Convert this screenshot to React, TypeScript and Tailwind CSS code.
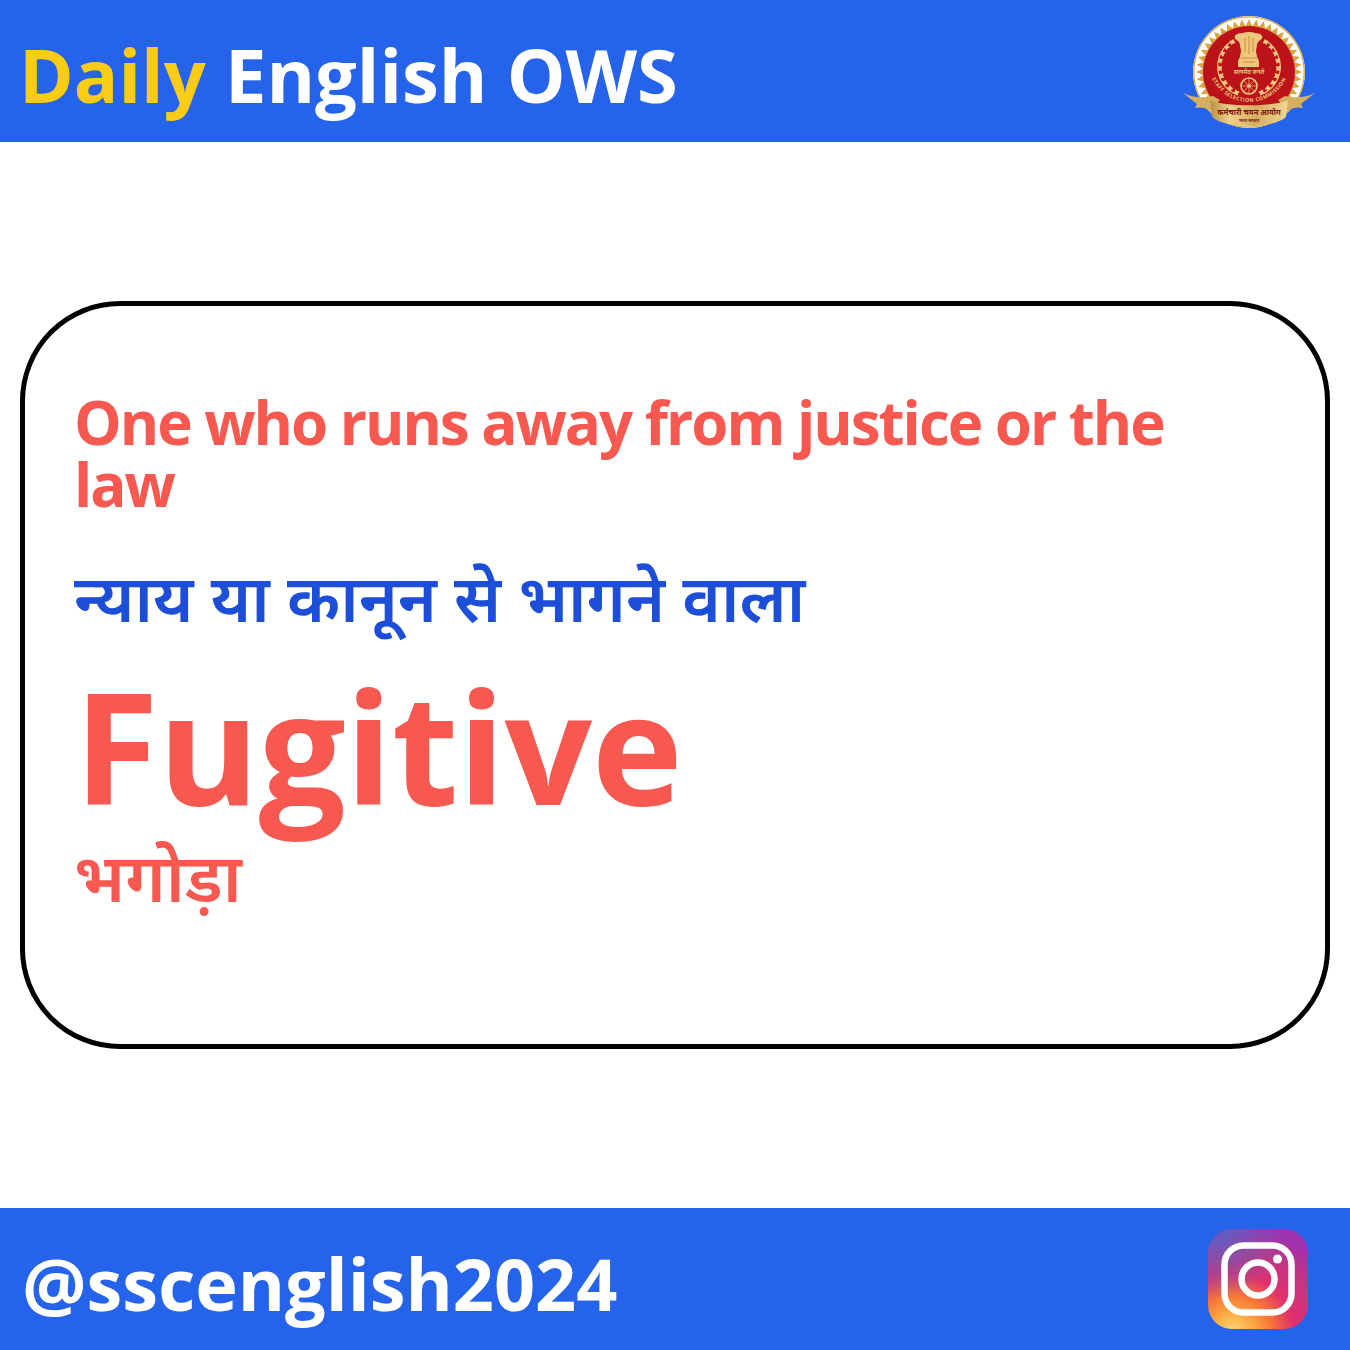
import React from 'react';

const GOLD = '#eec77c';

const ringAngles = Array.from({ length: 44 }, (_, i) => (i * 360) / 44);
// laurel leaves, degrees round the wreath centre
const leafAngles = [118, 133, 148, 163, 178, 193, 208, 223, 238];

const Leaves = ({ flip }: { flip?: boolean }) => (
  <g transform={flip ? 'translate(132 0) scale(-1 1)' : undefined}>
    <path d="M49 27A30 30 0 0 0 55 81" fill="none" stroke={GOLD} strokeWidth="1.2" />
    {leafAngles.map((a) => {
      const rad = (a * Math.PI) / 180;
      const x = 66 + 29 * Math.cos(rad);
      const y = 52 - 29 * Math.sin(rad);
      return (
        <g key={a} transform={`translate(${x} ${y}) rotate(${-a})`}>
          <ellipse cx="2.6" cy="-2.2" rx="3" ry="1.2" fill={GOLD} transform="rotate(-50 0 0)" />
          <ellipse cx="-2.6" cy="-2.2" rx="3" ry="1.2" fill={GOLD} transform="rotate(50 0 0)" />
        </g>
      );
    })}
  </g>
);

const SscLogo = () => (
  <svg width="132" height="114" viewBox="0 0 132 114" className="shrink-0">
    <defs>
      <linearGradient id="gold" x1="0" y1="0" x2="1" y2="0">
        <stop offset="0" stopColor="#b98f42" />
        <stop offset="0.25" stopColor="#eed08a" />
        <stop offset="0.6" stopColor="#d6ae5f" />
        <stop offset="1" stopColor="#f1d793" />
      </linearGradient>
      <path id="arc" d="M 25 47 A 41 41 0 0 0 107 47" fill="none" />
    </defs>
    <circle cx="66" cy="58" r="56" fill="#fff" />
    <circle cx="66" cy="58" r="55.2" fill="none" stroke="#d9a441" strokeWidth="1.2" />
    {ringAngles.map((a) => (
      <path key={a} d="M62.4 12.5 L69.6 12.5 L66 5z" fill="#d9a441" transform={`rotate(${a} 66 58)`} />
    ))}
    <circle cx="66" cy="58" r="46" fill="#bb1319" />
    {/* lion capital */}
    <path
      d="M60 19c2-1 4-1 6-1s4 0 6 1c3 0 6 1 7 3s-1 4-3 5c-1 1-2 2-2 4s-1 4-1 6 1 4 1 6c1 2 2 3 2 5v5H55v-5c0-2 1-3 2-5 0-2 1-4 1-6s-1-4-1-6-1-3-2-4c-2-1-4-3-3-5s4-3 8-3z"
      fill={GOLD}
    />
    <path d="M62 24v14M70 24v14M66 22v18M58 44h16M60 48h12" stroke="#c98f3c" strokeWidth="1" fill="none" />
    <Leaves />
    <Leaves flip />
    <text x="66" y="60" textAnchor="middle" fontSize="6" fontWeight="600" fill={GOLD} fontFamily="'Noto Sans', sans-serif">सत्यमेव जयते</text>
    {/* ashoka chakra */}
    <circle cx="66" cy="72" r="8" fill="none" stroke={GOLD} strokeWidth="1.6" />
    <circle cx="66" cy="72" r="1.8" fill={GOLD} />
    <path d="M66 64v16M58 72h16M60.3 66.3l11.4 11.4M71.7 66.3L60.3 77.7" stroke={GOLD} strokeWidth="0.7" />
    <text fontSize="5.2" fontWeight="700" fill={GOLD} letterSpacing="0.45" fontFamily="'Open Sans', sans-serif">
      <textPath href="#arc" startOffset="50%" textAnchor="middle">STAFF SELECTION COMMISSION</textPath>
    </text>
    {/* ribbon tails */}
    <path d="M0 79C10 84 20 84 30 82L37 86 27 97C22 93 16 93 12 94L14 90z" fill="#d6ae5f" />
    <path d="M132 79C122 84 112 84 102 82L95 86 105 97C110 93 116 93 120 94L118 90z" fill="#d6ae5f" />
    {/* ribbon band */}
    <path d="M27 86C40 93 92 93 105 86L103 103C90 115 42 115 29 103z" fill="url(#gold)" />
    <text x="66" y="101" textAnchor="middle" fontSize="7.6" fontWeight="700" fill="#7d1a10" fontFamily="'Noto Sans', sans-serif">कर्मचारी चयन आयोग</text>
    <text x="66" y="108" textAnchor="middle" fontSize="4" fontWeight="700" fill="#7d1a10" fontFamily="'Noto Sans', sans-serif">भारत सरकार</text>
  </svg>
);

const InstagramIcon = () => (
  <svg width="100" height="100" viewBox="0 0 100 100" className="shrink-0">
    <defs>
      <radialGradient id="ig1" cx="0.25" cy="1.05" r="1.1">
        <stop offset="0" stopColor="#ffdc80" />
        <stop offset="0.18" stopColor="#fcaf45" />
        <stop offset="0.35" stopColor="#f77737" />
        <stop offset="0.55" stopColor="#e1306c" />
        <stop offset="0.8" stopColor="#c13584" />
        <stop offset="1" stopColor="#a030b0" />
      </radialGradient>
      <radialGradient id="ig2" cx="0.1" cy="0" r="0.7">
        <stop offset="0" stopColor="#5b5fc7" />
        <stop offset="1" stopColor="#5b5fc7" stopOpacity="0" />
      </radialGradient>
    </defs>
    <rect width="100" height="100" rx="24" fill="url(#ig1)" />
    <rect width="100" height="100" rx="24" fill="url(#ig2)" />
    <rect x="16.5" y="16.5" width="67" height="67" rx="19" fill="none" stroke="#fff" strokeWidth="6.5" />
    <circle cx="50" cy="50" r="16.5" fill="none" stroke="#fff" strokeWidth="6.5" />
    <circle cx="69.5" cy="30" r="4.5" fill="#fff" />
  </svg>
);

export default function App() {
  return (
    <div className="w-[1350px] h-[1350px] flex flex-col bg-white font-['Open_Sans','Noto_Sans',sans-serif] font-bold">
      <header className="h-[142px] bg-[#2563eb] flex items-center justify-between pl-[19px] pr-[35px]">
        <h1 className="pt-[8px] text-[74px] leading-none text-white">
          <span className="text-[#facc15]">Daily</span> English OWS
        </h1>
        <SscLogo />
      </header>

      <main className="flex-1 flex items-center justify-center">
        <div className="w-[1310px] h-[748px] border-[5px] border-black rounded-[100px] pl-[49px] pr-[100px] pt-[85px]">
          <p className="text-[60px] leading-[62px] tracking-[-2px] text-[#f75950]">One who runs away from justice or the law</p>
          <p className="mt-[41px] text-[66px] leading-[80px] font-semibold text-[#1d4ed8]">न्याय या कानून से भागने वाला</p>
          <p className="mt-[19px] text-[154px] leading-[180px] tracking-[-0.5px] text-[#f75950]">Fugitive</p>
          <p className="mt-[6px] text-[68px] leading-[70px] font-semibold text-[#f75950]">भगोड़ा</p>
        </div>
      </main>

      <footer className="h-[142px] bg-[#2563eb] flex items-center justify-between pl-[22px] pr-[42px]">
        <span className="pt-[8px] text-[72px] leading-none text-white">@sscenglish2024</span>
        <InstagramIcon />
      </footer>
    </div>
  );
}
